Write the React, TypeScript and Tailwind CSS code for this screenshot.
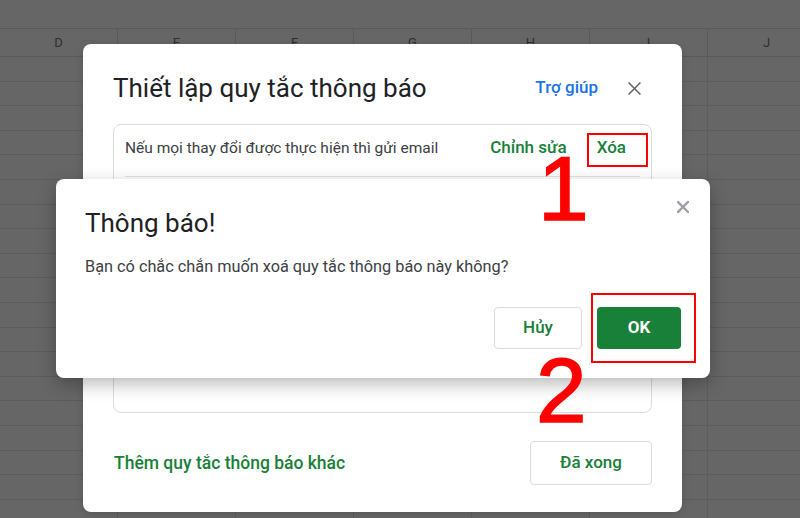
import React from 'react';

const COLS = ['D', 'E', 'F', 'G', 'H', 'I', 'J'];
const ROWS = Array.from({ length: 19 }, (_, i) => i);

const Sheet: React.FC = () => (
  <div className="w-[800px] h-[518px] overflow-hidden bg-[#666666]">
    <div className="h-[28px]" />
    <div className="flex h-[29px] border-y border-[#595959]">
      {COLS.map(c => (
        <div
          key={c}
          className="w-[118px] shrink-0 border-r border-[#595959] flex items-center justify-center text-[13px] text-[#2f2f2f]"
        >
          {c}
        </div>
      ))}
    </div>
    {ROWS.map(r => (
      <div key={r} className="flex h-[24.6px]">
        {COLS.map(c => (
          <div key={c} className="w-[118px] shrink-0 border-r border-b border-[#5c5c5c]" />
        ))}
      </div>
    ))}
  </div>
);

const CloseIcon: React.FC<{ size: number; stroke: string; width: number }> = ({ size, stroke, width }) => (
  <svg width={size} height={size} viewBox="0 0 12 12" fill="none">
    <path d="M1 1L11 11M11 1L1 11" stroke={stroke} strokeWidth={width} strokeLinecap="square" />
  </svg>
);

const RulesDialog: React.FC = () => (
  <div className="absolute left-[83px] top-[44px] w-[599px] bg-white rounded-[8px] shadow-[0_2px_8px_rgba(0,0,0,0.15)] px-[30px] pt-[28px] pb-[27px] flex flex-col">
    <div className="flex items-center h-[32px]">
      <h2 className="text-[26px] leading-[32px] text-[#202124] flex-1">Thiết lập quy tắc thông báo</h2>
      <span className="text-[17px] font-medium text-[#1a73e8]">Trợ giúp</span>
      <span className="ml-[30px] mr-[11px] flex">
        <CloseIcon size={13} stroke="#5f6368" width={1.4} />
      </span>
    </div>

    <div className="mt-[20px] h-[289px] border border-[#dadce0] rounded-[8px] flex flex-col">
      <div className="h-[52px] mx-[11px] pt-[12px] border-b border-[#e3e3e3] flex items-baseline">
        <span className="flex-1 text-[15.5px] leading-[20px] text-[#3c4043]">
          Nếu mọi thay đổi được thực hiện thì gửi email
        </span>
        <span className="text-[17px] leading-[20px] font-medium text-[#188038]">Chỉnh sửa</span>
        <span className="ml-[30px] mr-[14px] text-[17px] leading-[20px] font-medium text-[#188038]">Xóa</span>
      </div>
    </div>

    <div className="mt-[28px] flex items-center justify-between">
      <span className="ml-px text-[17.5px] font-medium text-[#188038]">Thêm quy tắc thông báo khác</span>
      <button className="w-[122px] h-[44px] border border-[#dadce0] rounded-[4px] bg-white text-[17px] font-medium text-[#188038]">
        Đã xong
      </button>
    </div>
  </div>
);

const ConfirmDialog: React.FC = () => (
  <div className="absolute left-[56px] top-[179px] w-[654px] h-[199px] bg-white rounded-[8px] shadow-[0_6px_18px_rgba(0,0,0,0.28)] pl-[29px] pr-[21px] pt-[22px] flex flex-col">
    <div className="flex items-start justify-between">
      <h3 className="mt-[6px] text-[26px] leading-[32px] text-[#202124]">Thông báo!</h3>
      <span className="flex">
        <CloseIcon size={12} stroke="#9aa0a6" width={2.4} />
      </span>
    </div>
    <p className="mt-[16px] text-[16.3px] leading-[24px] text-[#3c4043]">
      Bạn có chắc chắn muốn xoá quy tắc thông báo này không?
    </p>
    <div className="mt-[28px] mr-[8px] flex justify-end gap-[15px]">
      <button className="w-[88px] h-[42px] border border-[#dadce0] rounded-[4px] bg-white text-[17px] font-medium text-[#188038]">
        Hủy
      </button>
      <button className="w-[84px] h-[42px] rounded-[4px] bg-[#188038] text-[17px] font-bold text-white">
        OK
      </button>
    </div>
  </div>
);

const Annotations: React.FC = () => (
  <>
    <div className="absolute left-[587px] top-[133px] w-[61px] h-[34px] border-2 border-[#f00]" />
    <div className="absolute left-[591px] top-[293px] w-[105px] h-[70px] border-2 border-[#f00]" />
    <span
      className="absolute left-[538px] top-[143px] text-[91px] leading-none text-[#f00] [-webkit-text-stroke:1.6px_#f00]"
      style={{ fontFamily: '"Liberation Sans", Arial, sans-serif' }}
    >
      1
    </span>
    <span
      className="absolute left-[536px] top-[345px] text-[91px] leading-none text-[#f00] [-webkit-text-stroke:1.6px_#f00]"
      style={{ fontFamily: '"Liberation Sans", Arial, sans-serif' }}
    >
      2
    </span>
  </>
);

export default function App() {
  return (
    <div className="relative w-[800px] h-[518px] overflow-hidden font-['Roboto',sans-serif]">
      <Sheet />
      <RulesDialog />
      <ConfirmDialog />
      <Annotations />
    </div>
  );
}
